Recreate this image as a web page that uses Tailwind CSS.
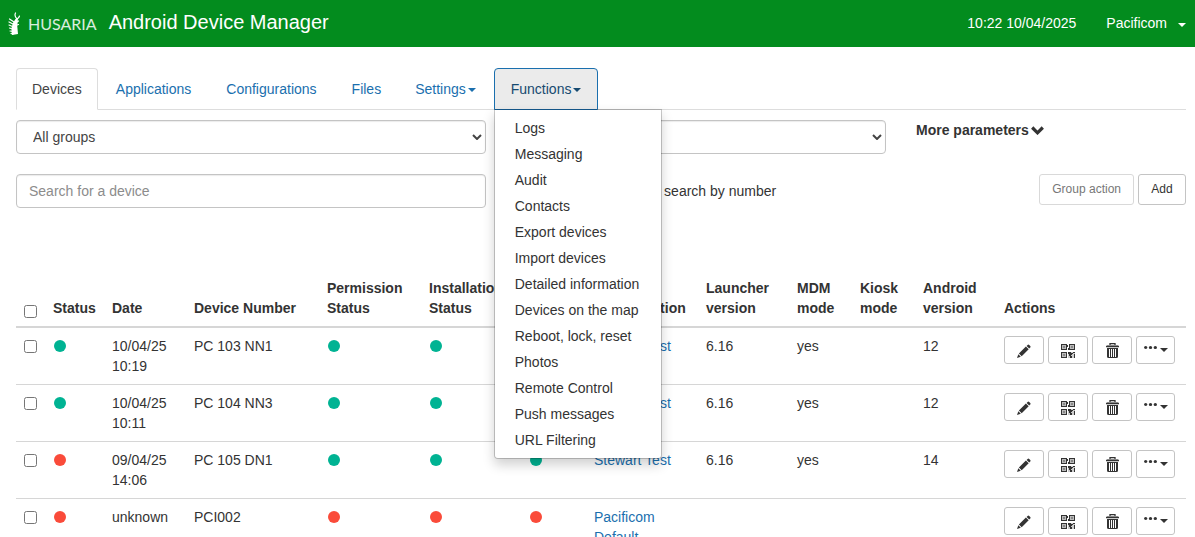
<!DOCTYPE html>
<html lang="en">

<head>
  <meta charset="UTF-8">
  <meta name="viewport" content="width=device-width, initial-scale=1">
  <title>Android Device Manager</title>
  <script src="https://cdn.jsdelivr.net/npm/@tailwindcss/browser@4"></script>
</head>

<body class="bg-white font-['Liberation_Sans',Arial,sans-serif] text-sm/5 text-[#333] overflow-hidden">

  <!-- icons -->
  <svg class="hidden">
    <symbol id="caret" viewBox="0 0 8 4">
      <path d="M0 0h8L4 4z" fill="currentColor" />
    </symbol>
    <symbol id="chevron" viewBox="0 0 10 6">
      <path d="M1 1l4 4 4-4" fill="none" stroke="#444" stroke-width="2" />
    </symbol>
    <symbol id="pencil" viewBox="0 0 14 14">
      <path d="M10.600.900q.8-.8 1.600 0l1 1q.8.8 0 1.600l-1 1L9.600 1.900zM8.900 2.400l2.800 2.800-7 7-2.800-2.800zM1.300 10.300l2.500 2.500L0 14z" fill="currentColor" />
    </symbol>
    <symbol id="qr" viewBox="0 0 14 14">
      <path d="M0 0h6v6H0zM8 0h6v6H8zM0 8h6v6H0z" fill="#bbb" />
      <path d="M0 0h6v6H0zM1 1v4h4V1zM8 0h6v6H8zM9 1v4h4V1zM0 8h6v6H0zM1 9v4h4V9z" fill="currentColor" fill-rule="evenodd" />
      <path d="M2 2h2v2H2zM10 2h2v2h-2zM2 10h2v2H2z" fill="#888" />
      <path d="M7 8h7v6H7z" fill="#ccc" />
      <path d="M6 1h1v2H6zM7 4h1v2H7zM7 8h3v1h1v2h-1v1H8v-2H7zM12 8h2v1h-2zM11 9h1v1h-1zM13 10h1v4h-1zM9 12h2v2H9z" fill="currentColor" />
    </symbol>
    <symbol id="trash" viewBox="0 0 13 15">
      <path d="M4 2.500V.600h5v1.900M0 3.500h13" fill="none" stroke="currentColor" stroke-width="1.300" />
      <path d="M1 2h11v1H1z" fill="#888" />
      <path d="M1 5h11v8.500q0 1.500-1.500 1.500h-8Q1 15 1 13.500zM3 6v8h1V6zM5 6v8h1V6zM7 6v8h1V6zM9 6v8h1V6z" fill="currentColor" fill-rule="evenodd" />
    </symbol>
    <symbol id="dots" viewBox="0 0 13 3">
      <path d="M0 1.500a1.700 1.500 0 0 1 3.400 0a1.700 1.500 0 0 1-3.400 0M4.800 1.500a1.700 1.500 0 0 1 3.400 0a1.700 1.500 0 0 1-3.400 0M9.600 1.500a1.700 1.500 0 0 1 3.400 0a1.700 1.500 0 0 1-3.400 0" fill="currentColor" />
    </symbol>
  </svg>

  <header class="flex items-center h-[47px] pl-2 pr-[9px] pb-px bg-[#038c1e] text-white">
    <a href="#" class="flex items-center gap-2">
      <svg class="w-3 h-6 mt-[2px]" viewBox="0 0 12 24" fill="#fff" stroke="#fff" stroke-linecap="round">
        <path d="M4 23Q2 14 7.500 7L10 6Q8.500 14 10 22z" stroke="none" />
        <path d="M9 7Q6 4 7.500 1M9 7q2-1 2.500-3M6 10L1.500 7M5 12L1 10M4.500 14.500L1 13M4.500 17L1.500 16M5 19.500L2 19M5 22l-2-.5M9 10l1.500-1M9 13l1.500-.5" fill="none" stroke-width="1.200" />
      </svg>
      <span class="font-['Lato',sans-serif] text-base/6 mt-[2px] text-white/85">HUSARIA</span>
    </a>
    <h1 class="ml-3 pb-[2px] text-xl/6">Android Device Manager</h1>
    <span class="ml-auto">10:22 10/04/2025</span>
    <button type="button" class="flex items-center gap-[11px] ml-[30px]">Pacificom
      <svg class="w-2 h-1 mt-[3px]"><use href="#caret" /></svg>
    </button>
  </header>

  <main class="pl-4 pr-[9px] pt-[21px]">

    <nav>
      <ul class="flex gap-[2px] border-b border-[#ddd] text-[#1a6fae]">
        <li class="-mb-px"><a href="#" class="block px-[15px] py-[10px] border border-[#ddd] border-b-white rounded-t bg-white text-[#444]">Devices</a></li>
        <li class="-mb-px"><a href="#" class="block px-[15px] py-[10px] border border-transparent">Applications</a></li>
        <li class="-mb-px"><a href="#" class="block px-4 py-[10px] border border-transparent">Configurations</a></li>
        <li class="-mb-px"><a href="#" class="block px-[15px] py-[10px] border border-transparent">Files</a></li>
        <li class="-mb-px"><a href="#" class="flex items-center gap-[2px] px-[15px] py-[10px] border border-transparent">Settings
            <svg class="w-2 h-1 mt-px"><use href="#caret" /></svg></a></li>
        <li class="-mb-px relative">
          <a href="#" class="flex items-center gap-[2px] px-4 py-[10px] border border-[#1a6fae] rounded-t bg-[#ebebeb] text-[#174a70]">Functions
            <svg class="w-2 h-1 mt-px"><use href="#caret" /></svg></a>
          <ul class="absolute z-10 top-full left-0 -mt-px w-[168px] py-[5px] bg-white bg-clip-padding border border-black/20 rounded-b shadow-[0_6px_12px_rgba(0,0,0,0.18)] text-[#333]">
            <li><a href="#" class="block px-5 py-[3px]">Logs</a></li>
            <li><a href="#" class="block px-5 py-[3px]">Messaging</a></li>
            <li><a href="#" class="block px-5 py-[3px]">Audit</a></li>
            <li><a href="#" class="block px-5 py-[3px]">Contacts</a></li>
            <li><a href="#" class="block px-5 py-[3px]">Export devices</a></li>
            <li><a href="#" class="block px-5 py-[3px]">Import devices</a></li>
            <li><a href="#" class="block px-5 py-[3px] whitespace-nowrap">Detailed information</a></li>
            <li><a href="#" class="block px-5 py-[3px] whitespace-nowrap">Devices on the map</a></li>
            <li><a href="#" class="block px-5 py-[3px]">Reboot, lock, reset</a></li>
            <li><a href="#" class="block px-5 py-[3px]">Photos</a></li>
            <li><a href="#" class="block px-5 py-[3px]">Remote Control</a></li>
            <li><a href="#" class="block px-5 py-[3px]">Push messages</a></li>
            <li><a href="#" class="block px-5 py-[3px]">URL Filtering</a></li>
          </ul>
        </li>
      </ul>
    </nav>

    <form class="grid grid-cols-12 gap-x-[30px] gap-y-5 pt-[10px]">
      <div class="relative col-span-5">
        <select aria-label="Group" class="appearance-none w-full h-[34px] px-4 border border-[#c4c4c4] rounded shadow-[inset_0_1px_1px_rgba(0,0,0,0.08)] text-[#444]">
          <option>All groups</option>
        </select>
        <svg class="absolute right-1 top-[14px] w-[10px] h-[6px] pointer-events-none"><use href="#chevron" /></svg>
      </div>
      <div class="relative col-span-4">
        <select aria-label="Configuration" class="appearance-none w-full h-[34px] px-4 border border-[#c4c4c4] rounded shadow-[inset_0_1px_1px_rgba(0,0,0,0.08)] text-[#444]">
          <option>All</option>
        </select>
        <svg class="absolute right-1 top-[14px] w-[10px] h-[6px] pointer-events-none"><use href="#chevron" /></svg>
      </div>
      <div class="col-span-3">
        <button type="button" class="flex items-center gap-[2px] font-bold">More parameters
          <svg class="w-[13px] h-[9px]" viewBox="0 0 13 9"><path d="M1.200 1.500l5.300 5.300 5.300-5.300" fill="none" stroke="#333" stroke-width="3.200" /></svg>
        </button>
      </div>

      <input type="text" aria-label="Search for a device" placeholder="Search for a device"
        class="col-span-5 h-[34px] px-3 border border-[#c4c4c4] rounded shadow-[inset_0_1px_1px_rgba(0,0,0,0.08)] placeholder:text-[#8c8c8c]">
      <div class="col-span-4 flex items-center gap-2 pl-24">
        <input type="checkbox" id="fast" class="size-[13px]">
        <label for="fast" class="whitespace-nowrap">Fast search by number</label>
      </div>
      <div class="col-span-3 flex justify-end items-start gap-1">
        <button type="button" disabled class="h-[31px] px-3 pb-px border border-[#d9d9d9] rounded-[3px] text-xs text-[#777] whitespace-nowrap">Group action</button>
        <button type="button" class="w-12 h-[31px] pb-px border border-[#c4c4c4] rounded-[3px] text-xs">Add</button>
      </div>
    </form>

    <table class="table-fixed w-full mt-[62px] text-left">
      <colgroup>
        <col class="w-[29px]">
        <col class="w-[59px]">
        <col class="w-[82px]">
        <col class="w-[133px]">
        <col class="w-[102px]">
        <col class="w-[100px]">
        <col class="w-[65px]">
        <col class="w-[112px]">
        <col class="w-[91px]">
        <col class="w-[63px]">
        <col class="w-[63px]">
        <col class="w-[81px]">
        <col class="w-[190px]">
      </colgroup>
      <thead class="align-bottom border-b-2 border-[#d6d6d6]">
        <tr>
          <th class="p-2"><input type="checkbox" aria-label="Select all" class="block size-[13px]"></th>
          <th class="p-2">Status</th>
          <th class="p-2">Date</th>
          <th class="p-2">Device Number</th>
          <th class="p-2">Permission Status</th>
          <th class="p-2">Installation Status</th>
          <th class="p-2">Files Status</th>
          <th class="p-2">Configuration</th>
          <th class="p-2">Launcher version</th>
          <th class="p-2">MDM mode</th>
          <th class="p-2">Kiosk mode</th>
          <th class="p-2">Android version</th>
          <th class="p-2">Actions</th>
        </tr>
      </thead>
      <tbody id="devices" class="align-top"></tbody>
    </table>
  </main>

  <script>
    const devices = [
      { date: '10/04/25 10:19', number: 'PC 103 NN1', status: [1, 1, 1, 1], config: 'Stewart Test', launcher: '6.16', mdm: 'yes', android: '12' },
      { date: '10/04/25 10:11', number: 'PC 104 NN3', status: [1, 1, 1, 1], config: 'Stewart Test', launcher: '6.16', mdm: 'yes', android: '12' },
      { date: '09/04/25 14:06', number: 'PC 105 DN1', status: [0, 1, 1, 1], config: 'Stewart Test', launcher: '6.16', mdm: 'yes', android: '14' },
      { date: 'unknown', number: 'PCI002', status: [0, 0, 0, 0], config: 'Pacificom Default', launcher: '', mdm: '', android: '' }
    ];

    function dot(ok) {
      return `<td class="p-2"><span class="block size-3 mt-1 ml-px rounded-full ${ok ? 'bg-[#00b393]' : 'bg-[#fa4b3a]'}"></span></td>`;
    }

    function actionButton(label, icon) {
      return `<button type="button" aria-label="${label}" class="flex items-end justify-center w-10 h-7 pb-[5px] border border-[#c4c4c4] rounded-[3px]">${icon}</button>`;
    }

    document.getElementById('devices').innerHTML = devices.map(d => `
      <tr class="border-b border-[#d6d6d6]">
        <td class="p-2"><input type="checkbox" aria-label="Select ${d.number}" class="block size-[13px] mt-1"></td>
        ${dot(d.status[0])}
        <td class="p-2">${d.date}</td>
        <td class="p-2">${d.number}</td>
        ${dot(d.status[1])}
        ${dot(d.status[2])}
        ${dot(d.status[3])}
        <td class="p-2"><a href="#" class="text-[#1a6fae]">${d.config}</a></td>
        <td class="p-2">${d.launcher}</td>
        <td class="p-2">${d.mdm}</td>
        <td class="p-2"></td>
        <td class="p-2">${d.android}</td>
        <td class="p-2">
          <div class="flex gap-1">
            ${actionButton('Edit', '<svg class="size-[14px]"><use href="#pencil" /></svg>')}
            ${actionButton('QR code', '<svg class="size-[14px]"><use href="#qr" /></svg>')}
            ${actionButton('Delete', '<svg class="w-[13px] h-[15px]"><use href="#trash" /></svg>')}
            <button type="button" aria-label="More" class="flex items-start gap-[3px] w-[39px] h-7 pl-[7px] pt-[9px] border border-[#c4c4c4] rounded-[3px]">
              <svg class="w-[13px] h-[3px]"><use href="#dots" /></svg>
              <svg class="w-2 h-1 mt-[2px]"><use href="#caret" /></svg>
            </button>
          </div>
        </td>
      </tr>
    `).join('');
  </script>

</body>

</html>
